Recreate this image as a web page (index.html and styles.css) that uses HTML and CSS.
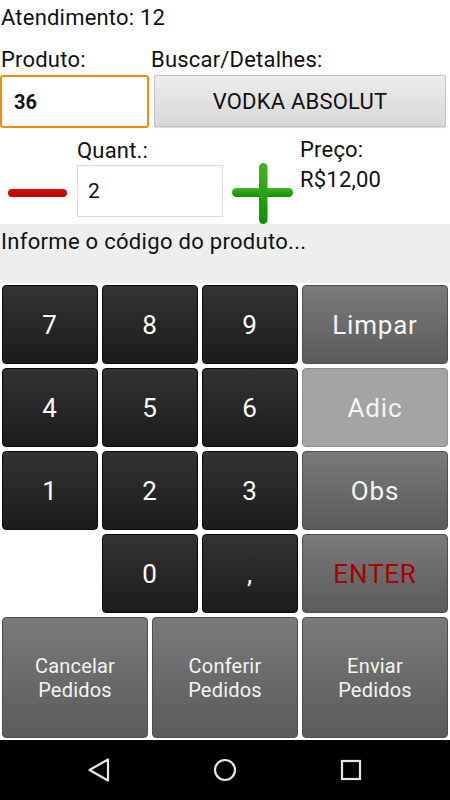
FILE: index.html
```html
<!DOCTYPE html>
<html lang="pt-BR">
<head>
    <meta charset="UTF-8">
    <meta name="viewport" content="width=device-width, initial-scale=1.0">
    <title>Atendimento</title>
    <link rel="stylesheet" href="styles.css">
</head>
<body>
    <div class="screen">
        <div class="header">Atendimento: 12</div>

        <div class="product">
            <label for="produto" class="label">Produto:</label>
            <span class="label">Buscar/Detalhes:</span>
            <input type="text" id="produto" class="code-input" value="36">
            <button class="search-btn">VODKA ABSOLUT</button>
        </div>

        <div class="qty-row">
            <div class="minus-col">
                <div class="minus"></div>
            </div>
            <div class="qty-col">
                <label for="quant" class="label">Quant.:</label>
                <input type="text" id="quant" class="qty-input" value="2">
            </div>
            <div class="plus-col">
                <svg class="plus" width="61" height="61" viewBox="0 0 61 61">
                    <defs>
                        <linearGradient id="green" x1="0" y1="0" x2="0" y2="1">
                            <stop offset="0" stop-color="#46b326"/>
                            <stop offset="1" stop-color="#0c9100"/>
                        </linearGradient>
                    </defs>
                    <rect x="0" y="25" width="61" height="9" rx="4.5" fill="url(#green)"/>
                    <rect x="27" y="0" width="8.5" height="61" rx="4.2" fill="url(#green)"/>
                </svg>
            </div>
            <div class="price-col">
                <div>Preço:</div>
                <div>R$12,00</div>
            </div>
        </div>

        <div class="message">Informe o código do produto...</div>

        <div class="keypad">
            <button class="key">7</button>
            <button class="key">8</button>
            <button class="key">9</button>
            <button class="key gray">Limpar</button>
            <button class="key">4</button>
            <button class="key">5</button>
            <button class="key">6</button>
            <button class="key light">Adic</button>
            <button class="key">1</button>
            <button class="key">2</button>
            <button class="key">3</button>
            <button class="key gray">Obs</button>
            <div></div>
            <button class="key">0</button>
            <button class="key">,</button>
            <button class="key gray enter">ENTER</button>
        </div>

        <div class="actions">
            <button class="key gray action">Cancelar<br>Pedidos</button>
            <button class="key gray action">Conferir<br>Pedidos</button>
            <button class="key gray action">Enviar<br>Pedidos</button>
        </div>

        <div class="navbar">
            <svg width="24" height="26" viewBox="0 0 24 26">
                <path d="M21 2.5 L21 23.5 L2.5 13 Z" fill="none" stroke="#e6e6e6" stroke-width="2.2" stroke-linejoin="round"/>
            </svg>
            <svg width="26" height="26" viewBox="0 0 26 26">
                <circle cx="13" cy="13" r="10" fill="none" stroke="#e6e6e6" stroke-width="2.2"/>
            </svg>
            <svg width="24" height="24" viewBox="0 0 24 24">
                <rect x="3" y="3" width="18" height="18" fill="none" stroke="#e6e6e6" stroke-width="2.2"/>
            </svg>
        </div>
    </div>
</body>
</html>
```

FILE: styles.css
```css
body {
    margin: 0;
    background-color: #fff;
    font-family: Roboto, "Noto Sans", sans-serif;
    color: #111;
}

.screen {
    width: 450px;
    height: 800px;
    display: flex;
    flex-direction: column;
    overflow: hidden;
}

.header {
    height: 42px;
    padding: 6px 0 0 1px;
    font-size: 22px;
    line-height: 24px;
    letter-spacing: 0.2px;
}

.label {
    font-size: 22px;
    line-height: 24px;
    letter-spacing: 0.2px;
}

.product {
    display: grid;
    grid-template-columns: 150px 1fr;
    grid-template-rows: 27px 52px;
    padding-left: 1px;
}

.code-input {
    box-sizing: border-box;
    width: 149px;
    height: 53px;
    margin: 0 0 0 -1px;
    border: 2px solid #f78a05;
    border-radius: 3px;
    padding: 0 0 0 12px;
    font-family: Roboto, sans-serif;
    font-size: 20px;
    font-weight: bold;
    color: #111;
    outline: none;
}

.search-btn {
    box-sizing: border-box;
    width: 292px;
    height: 52px;
    margin-left: 3px;
    border: 1px solid #c4c4c4;
    border-radius: 2px;
    background: linear-gradient(#ececec, #d8d8d8);
    box-shadow: 0 1px 1px rgba(0, 0, 0, 0.15);
    font-family: Roboto, sans-serif;
    font-size: 22px;
    letter-spacing: 0.2px;
    color: #111;
    padding: 0;
}

.qty-row {
    display: flex;
    height: 97px;
}

.minus-col {
    width: 77px;
}

.minus {
    width: 59px;
    height: 8px;
    margin: 62px 0 0 8px;
    border-radius: 4px;
    background: linear-gradient(#d41010, #c00000);
}

.qty-col {
    width: 149px;
    padding-top: 12px;
}

.qty-col .label {
    display: block;
    height: 26px;
}

.qty-input {
    box-sizing: border-box;
    width: 146px;
    height: 52px;
    margin: 0;
    border: 1px solid #dcdcdc;
    box-shadow: inset 0 1px 2px rgba(0, 0, 0, 0.06);
    padding: 0 0 0 10px;
    font-family: Roboto, sans-serif;
    font-size: 21px;
    color: #111;
    outline: none;
}

.plus-col {
    width: 74px;
    padding: 36px 0 0 6px;
    box-sizing: border-box;
}

.plus {
    display: block;
}

.price-col {
    padding-top: 8px;
    font-size: 22px;
    line-height: 30px;
    letter-spacing: 0.2px;
}

.message {
    height: 59px;
    box-sizing: border-box;
    padding: 6px 0 0 1px;
    background-color: #eeeeee;
    font-size: 22px;
    line-height: 24px;
    letter-spacing: 0.3px;
}

.keypad {
    display: grid;
    grid-template-columns: 96px 96px 96px 146px;
    grid-template-rows: repeat(4, 79px);
    gap: 4px;
    padding: 2px 2px 0;
}

.key {
    box-sizing: border-box;
    margin: 0;
    padding: 0;
    border: 1px solid #0a0a0a;
    border-radius: 4px;
    background: linear-gradient(#333333, #1b1b1b);
    color: #fff;
    font-family: Roboto, sans-serif;
    font-size: 26px;
    letter-spacing: 0.8px;
}

.key.gray {
    border-color: #4e4e4e;
    background: linear-gradient(#7a7a7a, #5b5b5b);
    color: #f4f4f4;
}

.key.light {
    border-color: #8e8e8e;
    background: #a4a4a4;
    color: #f4f4f4;
}

.key.enter {
    color: #a80000;
}

.actions {
    display: grid;
    grid-template-columns: repeat(3, 146px);
    gap: 4px;
    height: 121px;
    padding: 4px 2px 0;
}

.key.action {
    font-size: 20px;
    line-height: 24px;
    letter-spacing: 0.2px;
}

.navbar {
    margin-top: 2px;
    height: 60px;
    flex-shrink: 0;
    background-color: #000;
    display: flex;
    align-items: center;
    justify-content: center;
    gap: 101px;
}
```
